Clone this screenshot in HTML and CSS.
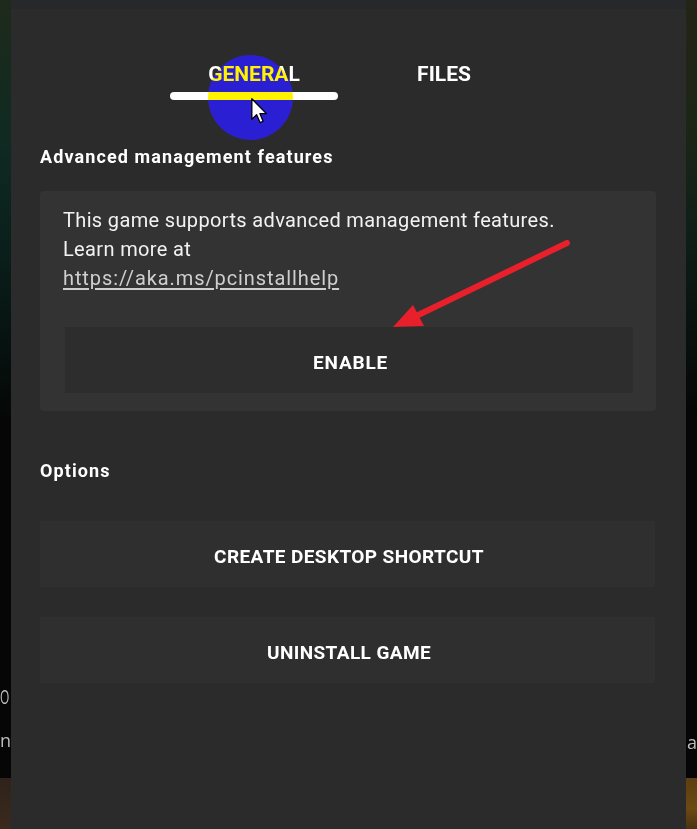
FILE: index.html
```html
<!DOCTYPE html>
<html lang="en">
<head>
<meta charset="utf-8">
<title>Manage game</title>
<link rel="stylesheet" href="styles.css">
</head>
<body>
<div class="screen">
  <div class="side side-left">
    <div class="side-top"></div>
    <div class="side-dark"><span class="ghost ghost-o">O</span><span class="ghost ghost-n">n</span></div>
    <div class="side-bottom"></div>
  </div>

  <main class="panel">
    <div class="panel-strip"></div>

    <nav class="tabs">
      <div class="tab tab-active">
        <span class="tab-label">GENERAL</span>
        <span class="tab-bar"></span>
      </div>
      <div class="tab">
        <span class="tab-label">FILES</span>
      </div>
      <span class="click-spot"></span>
      <svg class="cursor" width="17" height="26" viewBox="0 0 13 20" aria-hidden="true">
        <path d="M0.6 0.6 L0.6 16.4 L4.3 12.9 L6.9 18.9 L9.3 17.9 L6.8 12.0 L11.8 12.0 Z" fill="#ffffff" stroke="#000000" stroke-width="1" stroke-linejoin="round"/>
      </svg>
    </nav>

    <h2 class="section-title first">Advanced management features</h2>

    <section class="info-box">
      <p class="info-text">This game supports advanced management features.<br>Learn more at<br><a class="info-link" href="#">https://aka.ms/pcinstallhelp</a></p>
      <button class="btn btn-enable">ENABLE</button>
    </section>

    <h2 class="section-title options">Options</h2>

    <div class="option-list">
      <button class="btn btn-option">CREATE DESKTOP SHORTCUT</button>
      <button class="btn btn-option">UNINSTALL GAME</button>
    </div>

    <svg class="annotation" width="675" height="829" viewBox="0 0 675 829" aria-hidden="true">
      <line x1="556" y1="243" x2="401" y2="318" stroke="#e8202b" stroke-width="6" stroke-linecap="round"/>
      <polygon points="382,327 402,305 413,326" fill="#e8202b"/>
    </svg>
  </main>

  <div class="side side-right">
    <div class="side-top"></div>
    <div class="side-dark"><span class="ghost ghost-a">a</span></div>
    <div class="side-bottom"></div>
  </div>
</div>
</body>
</html>
```

FILE: styles.css
```css
* { box-sizing: border-box; }

html, body {
  margin: 0;
  padding: 0;
  background: #050505;
}

body {
  font-family: Roboto, "Liberation Sans", sans-serif;
  color: #ffffff;
}

.screen {
  display: grid;
  grid-template-columns: 11px 675px 11px;
  height: 829px;
  overflow: hidden;
}

/* background strips around the panel */
.side {
  display: flex;
  flex-direction: column;
  overflow: hidden;
}
.side-top { height: 415px; }
.side-dark {
  height: 363px;
  background: #060606;
  position: relative;
}
.side-bottom { flex: 1; }

.side-left .side-top {
  background: linear-gradient(180deg, #1e2a1b 0%, #0f2a22 35%, #0a1f1b 60%, #050807 100%);
}
.side-left .side-bottom {
  background: linear-gradient(180deg, #2e221a 0%, #3b2a1d 100%);
}
.side-right .side-top {
  background: linear-gradient(180deg, #242418 0%, #1c2616 30%, #0f1f18 55%, #040605 100%);
}
.side-right .side-bottom {
  background: linear-gradient(180deg, #5b3e12 0%, #6b4a12 60%, #4a3212 100%);
}

.ghost {
  position: absolute;
  font-family: "Open Sans", sans-serif;
  color: #bdbdbd;
  line-height: 1;
}
.ghost-o {
  left: 0;
  top: 272px;
  font-size: 20px;
  transform: scaleX(0.6);
  transform-origin: left center;
}
.ghost-n { left: 0; top: 316px; font-size: 18px; }
.ghost-a { left: 1px; top: 318px; font-size: 18px; }

/* panel */
.panel {
  position: relative;
  background: #2b2b2b;
  padding: 0 30px 0 29px;
}

.panel-strip {
  height: 9px;
  margin: 0 -30px 0 -29px;
  background: #27282a;
}

.tabs {
  position: relative;
  display: flex;
  gap: 22px;
  margin: 53px 0 0 130px;
  height: 38px;
}

.tab {
  width: 168px;
  display: flex;
  flex-direction: column;
  align-items: center;
}

.tab-label {
  font-weight: 700;
  font-size: 21px;
  line-height: 24px;
  height: 24px;
}

.tab-bar {
  display: block;
  width: 168px;
  height: 8px;
  margin-top: 6px;
  border-radius: 4px;
  background: #ffffff;
}

/* click highlight circle (screen recording effect) */
.click-spot {
  position: absolute;
  left: 38px;
  top: -7px;
  width: 85px;
  height: 85px;
  border-radius: 50%;
  background: #000cff;
  mix-blend-mode: difference;
  pointer-events: none;
}

.cursor {
  position: absolute;
  left: 81px;
  top: 36px;
}

.section-title {
  margin: 0;
  font-size: 18px;
  font-weight: 700;
  line-height: 24px;
  letter-spacing: 1.1px;
}
.section-title.first { margin-top: 45px; }
.section-title.options { margin-top: 48px; }

.info-box {
  margin-top: 22px;
  background: #333333;
  border-radius: 4px;
  padding: 15px 24px 18px 23px;
}

.info-text {
  margin: 0;
  font-size: 20px;
  line-height: 29px;
  letter-spacing: 0.35px;
  color: #f2f2f2;
}

.info-link {
  color: #cfcfcf;
  text-decoration: underline;
  text-underline-offset: 3px;
  letter-spacing: 0.9px;
}

.btn {
  display: block;
  width: 100%;
  border: 0;
  border-radius: 0;
  font-family: inherit;
  font-weight: 700;
  color: #ffffff;
  cursor: pointer;
  text-align: center;
  padding: 4px 0 0 3px;
}

.btn-enable {
  margin: 34px 0 0 2px;
  width: calc(100% - 1px);
  height: 66px;
  background: #2d2d2d;
  font-size: 19px;
  letter-spacing: 0.8px;
}

.option-list {
  margin-top: 38px;
  display: flex;
  flex-direction: column;
  gap: 30px;
}

.btn-option {
  height: 66px;
  width: 615px;
  background: #2f2f2f;
  font-size: 19px;
  letter-spacing: 0.4px;
}

.annotation {
  position: absolute;
  left: 0;
  top: 0;
  pointer-events: none;
}
```
